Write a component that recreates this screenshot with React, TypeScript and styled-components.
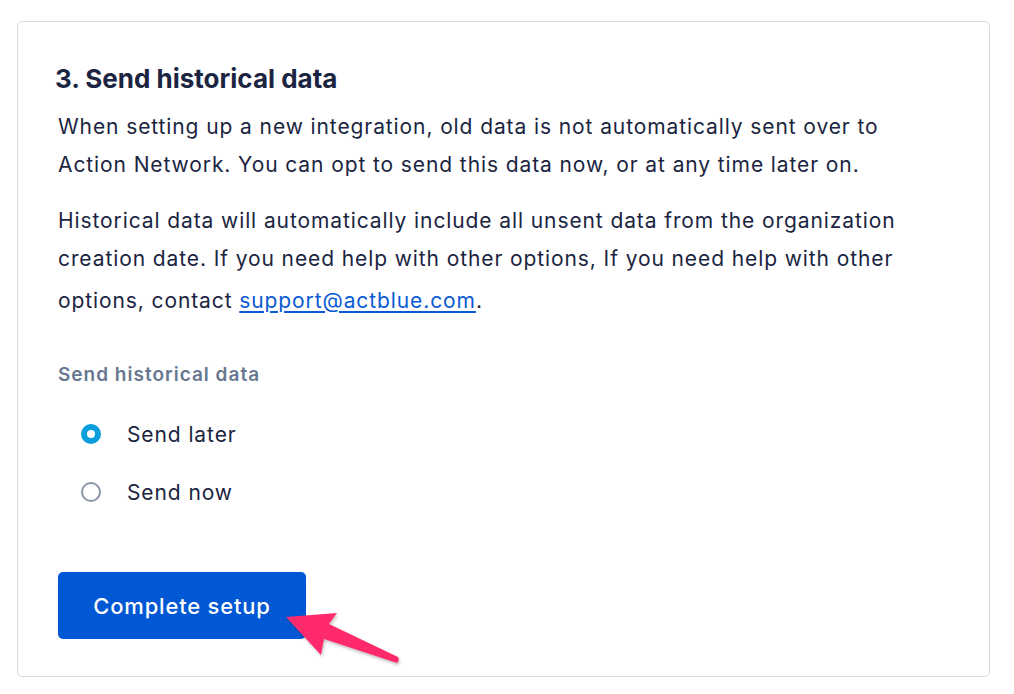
import React, { useState } from 'react';
import styled, { createGlobalStyle } from 'styled-components';

const GlobalStyle = createGlobalStyle`
  html, body {
    margin: 0;
    padding: 0;
    background: #ffffff;
  }
  body {
    font-family: Inter, "Noto Sans", "Liberation Sans", sans-serif;
    color: #1b2541;
    -webkit-font-smoothing: antialiased;
  }
`;

const Page = styled.div`
  padding: 21px 24px 0 17px;
`;

const Card = styled.section`
  position: relative;
  box-sizing: border-box;
  width: 973px;
  height: 656px;
  border: 1px solid #d6dbe4;
  border-radius: 5px;
  padding: 41px 40px 0 37px;
`;

const Heading = styled.h2`
  margin: 0 0 13px 0;
  font-size: 26px;
  line-height: 32px;
  font-weight: 700;
  color: #1b2541;
`;

const Paragraph = styled.p`
  margin: 0 0 18px 3px;
  font-size: 21px;
  line-height: 38px;
  letter-spacing: 0.9px;
  color: #1b2541;
`;

const Link = styled.a`
  display: inline-block;
  padding-top: 4px;
  color: #0b5ad3;
  text-decoration: underline;
  text-underline-offset: 3px;
`;

const Fieldset = styled.fieldset`
  border: 0;
  margin: 43px 0 0 3px;
  padding: 0;
`;

const Legend = styled.legend`
  padding: 0;
  font-size: 19px;
  line-height: 24px;
  font-weight: 600;
  letter-spacing: 1px;
  color: #687790;
`;

const Options = styled.div`
  display: flex;
  flex-direction: column;
  gap: 16px;
  margin-top: 26px;
  padding-left: 23px;
`;

const Option = styled.label`
  display: flex;
  align-items: center;
  gap: 26px;
  height: 42px;
  font-size: 21px;
  letter-spacing: 0.9px;
  color: #1b2541;
  cursor: pointer;
`;

const Radio = styled.span<{ $checked: boolean }>`
  box-sizing: border-box;
  width: 20px;
  height: 20px;
  border-radius: 50%;
  border: ${(p) => (p.$checked ? '6px solid #0a9fdc' : '2.5px solid #8b95a7')};
  background: #ffffff;
  flex-shrink: 0;
`;

const HiddenInput = styled.input`
  position: absolute;
  opacity: 0;
  pointer-events: none;
`;

const Button = styled.button`
  margin: 59px 0 0 3px;
  width: 248px;
  height: 67px;
  border: 0;
  border-radius: 5px;
  background: #0058d5;
  color: #ffffff;
  font-family: inherit;
  font-size: 22px;
  font-weight: 500;
  letter-spacing: 0.8px;
  cursor: pointer;
`;

const Arrow = styled.svg`
  position: absolute;
  left: 259px;
  top: 585px;
  overflow: visible;
`;

const options = [
  { id: 'later', label: 'Send later' },
  { id: 'now', label: 'Send now' },
];

export default function App() {
  const [choice, setChoice] = useState('later');

  return (
    <>
      <GlobalStyle />
      <Page>
        <Card>
          <Heading>3. Send historical data</Heading>
          <Paragraph>
            When setting up a new integration, old data is not automatically sent over to Action
            Network. You can opt to send this data now, or at any time later on.
          </Paragraph>
          <Paragraph>
            Historical data will automatically include all unsent data from the organization
            creation date. If you need help with other options, If you need help with other
            options, contact <Link href="#">support@actblue.com</Link>.
          </Paragraph>
          <Fieldset>
            <Legend>Send historical data</Legend>
            <Options>
              {options.map((o) => (
                <Option key={o.id}>
                  <HiddenInput
                    type="radio"
                    name="historical"
                    checked={choice === o.id}
                    onChange={() => setChoice(o.id)}
                  />
                  <Radio $checked={choice === o.id} />
                  {o.label}
                </Option>
              ))}
            </Options>
          </Fieldset>
          <Button>Complete setup</Button>
          <Arrow width="150" height="90" viewBox="0 0 150 90">
            <defs>
              <filter id="arrowShadow" x="-20%" y="-20%" width="140%" height="140%">
                <feDropShadow dx="1" dy="2" stdDeviation="1.5" floodColor="#000" floodOpacity="0.25" />
              </filter>
            </defs>
            <path
              d="M9 10 L60 6 L52 17 L121 50 Q123 53 120 56 L47 32 L44 48 Z"
              fill="#ff2c6c"
              filter="url(#arrowShadow)"
            />
          </Arrow>
        </Card>
      </Page>
    </>
  );
}
